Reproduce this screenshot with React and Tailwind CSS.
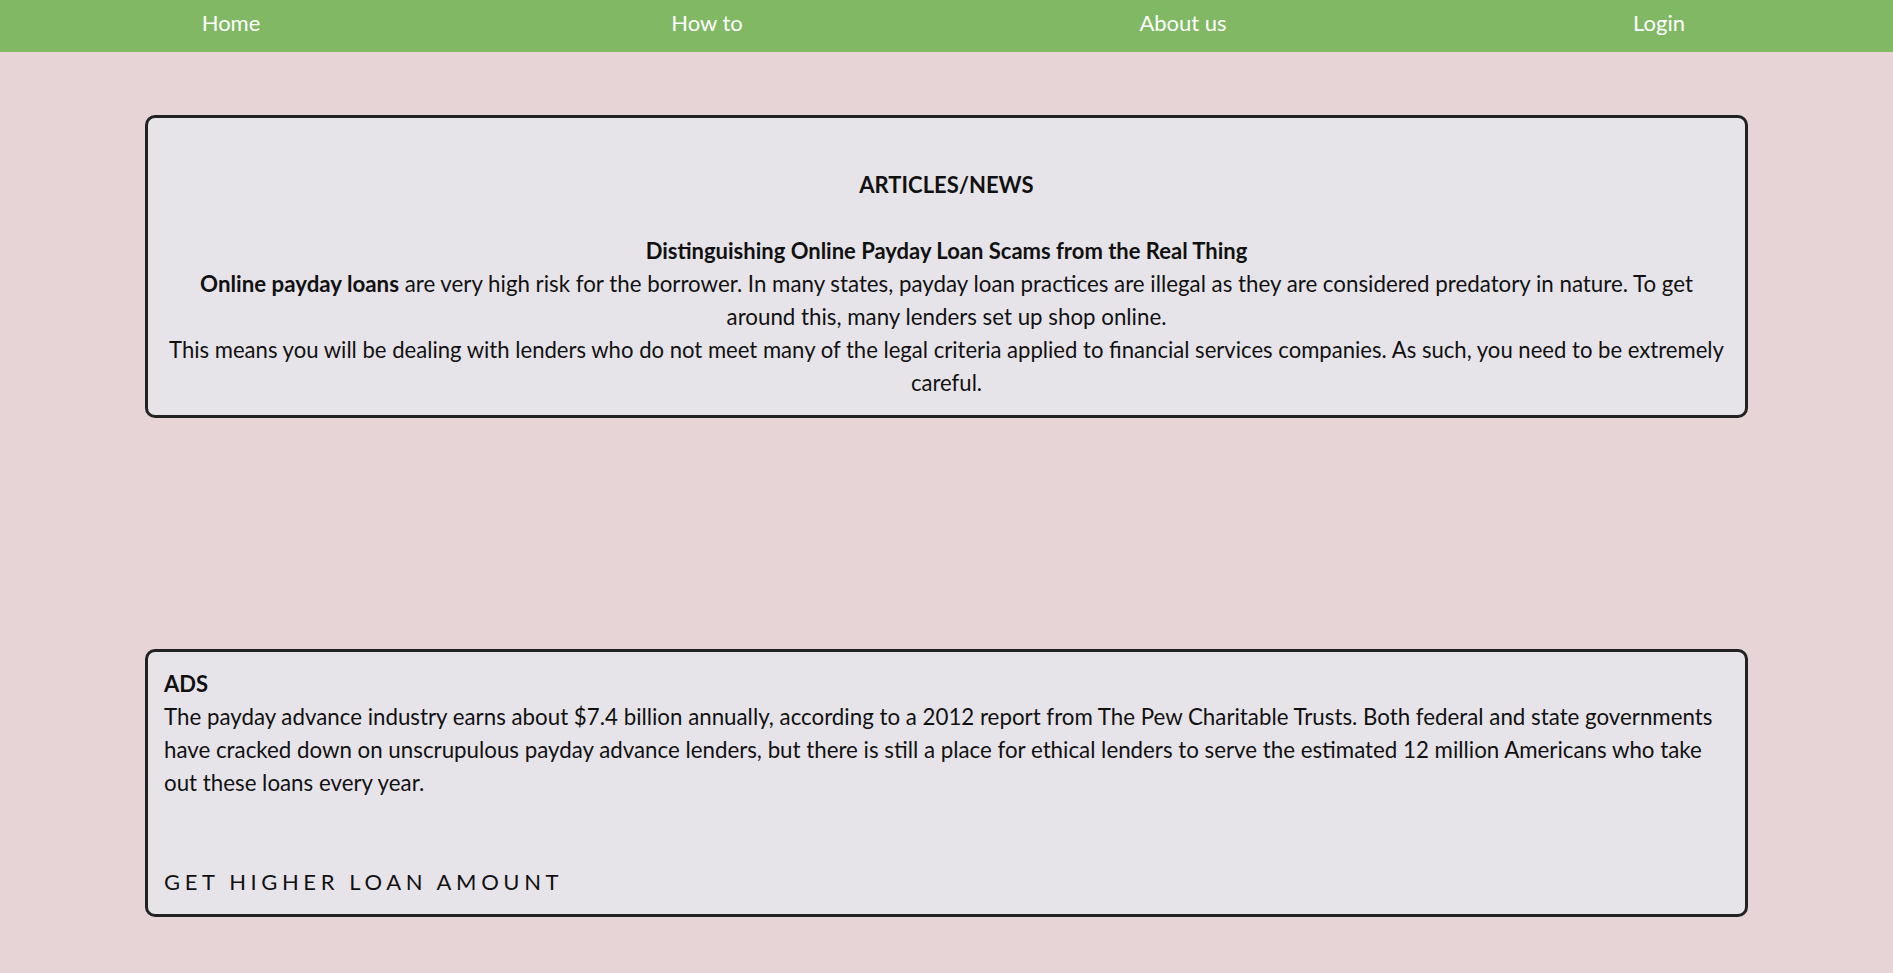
export default function App() {
  const font = { fontFamily: "Lato, 'Open Sans', sans-serif" };
  return (
    <div className="min-h-[973px] overflow-hidden bg-[#e7d4d6] text-[#111]" style={font}>
      <nav className="h-[52px] bg-[#80b864]">
        <div className="ml-[-7px] grid w-[1904px] grid-cols-4 pt-[8px] text-[22px] leading-[30px] text-white">
          <a className="text-center">Home</a>
          <a className="text-center">How to</a>
          <a className="text-center">About us</a>
          <a className="text-center">Login</a>
        </div>
      </nav>
      <section className="mx-[145px] mt-[63px] rounded-[10px] border-[3px] border-[#222] bg-[#e6e4e9] px-4 pt-[17px] pb-[16px] text-center text-[22px] leading-[33px]">
        <div className="h-[33px]"></div>
        <div className="font-bold">ARTICLES/NEWS</div>
        <div className="h-[33px]"></div>
        <div className="font-bold">Distinguishing Online Payday Loan Scams from the Real Thing</div>
        <p className="text-[22.3px]">
          <b>Online payday loans</b> are very high risk for the borrower. In many states, payday loan
          practices are illegal as they are considered predatory in nature. To get
          <br />
          around this, many lenders set up shop online.
        </p>
        <p className="text-[22.1px]">
          This means you will be dealing with lenders who do not meet many of the legal criteria
          applied to financial services companies. As such, you need to be extremely careful.
        </p>
      </section>
      <section className="mx-[145px] mt-[231px] rounded-[10px] border-[3px] border-[#222] bg-[#e6e4e9] px-4 pt-[15px] pb-[16px] text-[22px] leading-[33px]">
        <div className="font-bold">ADS</div>
        <p className="text-[22.3px]">
          The payday advance industry earns about $7.4 billion annually, according to a 2012 report
          from The Pew Charitable Trusts. Both federal and state governments have cracked down on
          unscrupulous payday advance lenders, but there is still a place for ethical lenders to serve
          the estimated 12 million Americans who take out these loans every year.
        </p>
        <div className="h-[66px]"></div>
        <div className="tracking-[4.6px]">GET HIGHER LOAN AMOUNT</div>
      </section>
    </div>
  );
}
